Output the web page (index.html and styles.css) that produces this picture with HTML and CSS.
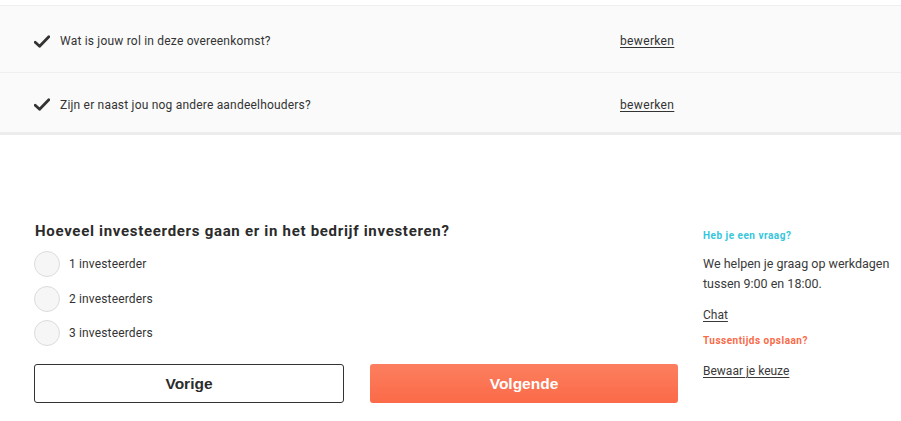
FILE: index.html
```html
<!DOCTYPE html>
<html lang="nl">
<head>
<meta charset="utf-8">
<link rel="stylesheet" href="styles.css">
</head>
<body>
<div class="summary">
  <div class="row row-first">
    <div class="row-q">
      <svg class="check" width="16" height="13" viewBox="0 0 16 13"><path d="M1.2 7.2 L5.6 11.2 L14.8 1.8" fill="none" stroke="#333" stroke-width="2.8" stroke-linecap="round" stroke-linejoin="round"/></svg>
      <span>Wat is jouw rol in deze overeenkomst?</span>
    </div>
    <a class="edit" href="#">bewerken</a>
  </div>
  <div class="row row-second">
    <div class="row-q">
      <svg class="check" width="16" height="13" viewBox="0 0 16 13"><path d="M1.2 7.2 L5.6 11.2 L14.8 1.8" fill="none" stroke="#333" stroke-width="2.8" stroke-linecap="round" stroke-linejoin="round"/></svg>
      <span>Zijn er naast jou nog andere aandeelhouders?</span>
    </div>
    <a class="edit" href="#">bewerken</a>
  </div>
</div>

<div class="content">
  <div class="main">
    <h2 class="question">Hoeveel investeerders gaan er in het bedrijf investeren?</h2>
    <div class="options">
      <label class="option"><span class="radio"></span><span>1 investeerder</span></label>
      <label class="option"><span class="radio"></span><span>2 investeerders</span></label>
      <label class="option"><span class="radio"></span><span>3 investeerders</span></label>
    </div>
    <div class="buttons">
      <button class="btn btn-prev">Vorige</button>
      <button class="btn btn-next">Volgende</button>
    </div>
  </div>
  <aside class="side">
    <div class="side-title cyan">Heb je een vraag?</div>
    <p class="side-text">We helpen je graag op werkdagen tussen 9:00 en 18:00.</p>
    <a class="side-link" href="#">Chat</a>
    <div class="side-title orange">Tussentijds opslaan?</div>
    <a class="side-link" href="#">Bewaar je keuze</a>
  </aside>
</div>
</body>
</html>
```

FILE: styles.css
```css
html, body {
  margin: 0;
  padding: 0;
  background: #fff;
}
body {
  font-family: Roboto, "Liberation Sans", sans-serif;
  color: #333;
}
.summary {
  margin-top: 5px;
  border-top: 1px solid #efefef;
  border-bottom: 3px solid #ececec;
  background: #fafafa;
}
.row {
  display: flex;
  align-items: center;
  padding-left: 34px;
  border-bottom: 1px solid #efefef;
  font-size: 12px;
  letter-spacing: 0.2px;
}
.row-first { height: 62px; padding-top: 4px; }
.row-second { height: 55px; border-bottom: none; padding-top: 4px; }
.row-q {
  display: flex;
  align-items: center;
  width: 586px;
}
.check { margin-right: 10px; }
.edit {
  color: #333;
  text-decoration: underline;
  text-underline-offset: 2px;
  letter-spacing: 0.35px;
}
.content {
  display: flex;
  padding: 87px 0 0 34px;
}
.main {
  width: 644px;
}
.question {
  margin: 0 0 11px 1px;
  font-size: 15px;
  font-weight: 700;
  letter-spacing: 0.7px;
  color: #2b2b2b;
  line-height: 18px;
}
.options {
  display: flex;
  flex-direction: column;
  gap: 8.5px;
}
.option {
  display: flex;
  align-items: center;
  font-size: 12px;
  letter-spacing: 0.15px;
  color: #333;
}
.radio {
  width: 24px;
  height: 24px;
  border: 1px solid #dcdcdc;
  border-radius: 50%;
  background: #f6f6f6;
  margin-right: 9px;
}
.buttons {
  display: flex;
  gap: 26px;
  margin-top: 18px;
}
.btn {
  flex: 1;
  height: 39px;
  border-radius: 3px;
  font-family: "Liberation Sans", Arial, sans-serif;
  font-weight: 700;
  font-size: 15.5px;
}
.btn-prev {
  background: #fff;
  border: 1px solid #333;
  color: #2b2b2b;
}
.btn-next {
  border: none;
  color: #fff;
  background: linear-gradient(180deg, #fc7f5f, #fb6a48);
}
.side {
  margin-left: 25px;
  padding-top: 8px;
}
.side-title {
  font-size: 10px;
  font-weight: 700;
  letter-spacing: 0.5px;
}
.cyan { color: #36c6dc; }
.orange { color: #f96a48; }
.side-text {
  margin: 13px 0 14px;
  font-size: 12.5px;
  line-height: 20px;
  color: #3a3a3a;
  width: 190px;
}
.side-link {
  display: block;
  font-size: 12px;
  color: #3a3a3a;
  text-decoration: underline;
  text-underline-offset: 2px;
  margin-bottom: 15px;
}
.side-link + .side-title { margin-bottom: 18px; margin-top: -2px; }
```
